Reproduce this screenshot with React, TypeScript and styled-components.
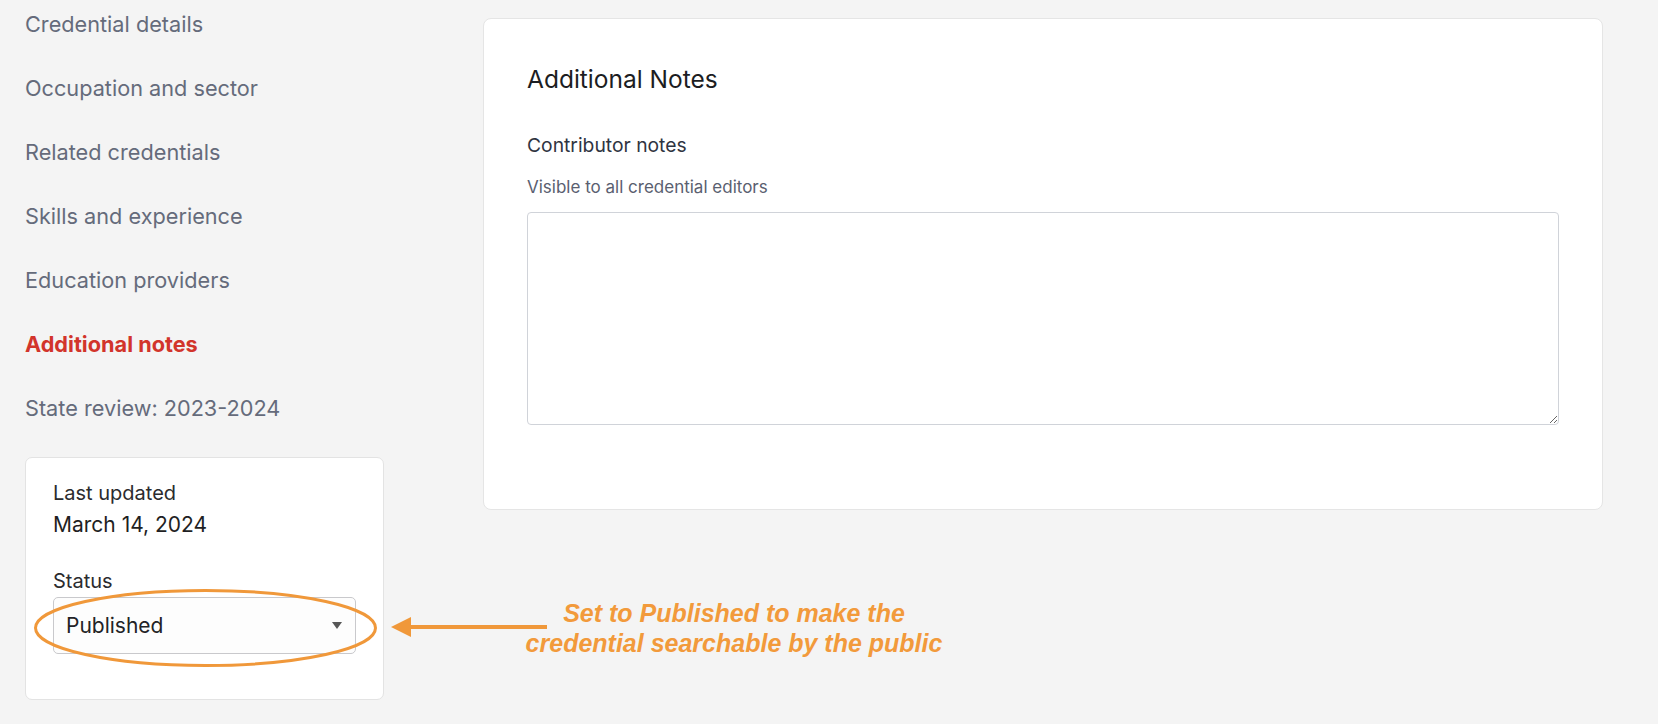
import React from "react";
import styled, { createGlobalStyle } from "styled-components";

const GlobalStyle = createGlobalStyle`
  * { box-sizing: border-box; }
  html, body { margin: 0; padding: 0; }
  body {
    background: #f4f4f4;
    font-family: Inter, "Noto Sans", sans-serif;
    -webkit-font-smoothing: antialiased;
  }
`;

const Page = styled.div`
  position: relative;
  display: grid;
  grid-template-columns: 360px 1120px;
  column-gap: 99px;
  padding-left: 24px;
  min-height: 724px;
`;

const Sidebar = styled.aside`
  display: flex;
  flex-direction: column;
  padding-top: 12px;
`;

const NavList = styled.nav`
  display: flex;
  flex-direction: column;
  gap: 40px;
  padding-left: 1px;
`;

const NavItem = styled.a<{ $active?: boolean }>`
  font-size: 21.7px;
  line-height: 24px;
  font-weight: ${(p) => (p.$active ? 700 : 400)};
  color: ${(p) => (p.$active ? "#d2342b" : "#656b7b")};
  text-decoration: none;
  cursor: pointer;
`;

const StatusCard = styled.section`
  margin-top: 37px;
  margin-left: 1px;
  width: 359px;
  background: #ffffff;
  border: 1px solid #e3e3e3;
  border-radius: 7px;
  padding: 23px 27px 45px;
  display: flex;
  flex-direction: column;
`;

const MetaLabel = styled.div`
  font-size: 20px;
  line-height: 24px;
  color: #2b2b2e;
`;

const MetaValue = styled.div`
  font-size: 21px;
  line-height: 26px;
  color: #1f1f23;
  margin-top: 7px;
`;

const StatusLabel = styled(MetaLabel)`
  margin-top: 31px;
`;

const SelectBox = styled.div`
  margin-top: 4px;
  height: 57px;
  border: 1px solid #c9c9cc;
  border-radius: 5px;
  background: #fdfdfd;
  display: flex;
  align-items: center;
  justify-content: space-between;
  padding: 0 13px 0 12px;
  font-size: 21px;
  line-height: 24px;
  color: #232326;
`;

const Caret = styled.svg`
  width: 10px;
  height: 7px;
  fill: #575757;
`;

const MainCard = styled.main`
  margin-top: 18px;
  align-self: start;
  background: #ffffff;
  border: 1px solid #e5e5e5;
  border-radius: 8px;
  padding: 44px 43px 84px;
  display: flex;
  flex-direction: column;
`;

const Heading = styled.h2`
  margin: 0;
  font-size: 24.5px;
  line-height: 32px;
  font-weight: 400;
  color: #1c1d22;
`;

const FieldLabel = styled.label`
  margin-top: 38px;
  font-size: 19.3px;
  line-height: 24px;
  font-weight: 400;
  color: #2f3441;
`;

const FieldHint = styled.div`
  margin-top: 19px;
  font-size: 17px;
  line-height: 22px;
  color: #5a6070;
`;

const NotesArea = styled.textarea`
  margin-top: 14px;
  width: 100%;
  height: 213px;
  border: 1px solid #d0d3d9;
  border-radius: 4px;
  background: #ffffff;
  font-family: inherit;
  font-size: 16px;
  padding: 10px 12px;
  resize: vertical;
  outline: none;
`;

const Callout = styled.svg`
  position: absolute;
  left: 0;
  top: 0;
  width: 1658px;
  height: 724px;
  pointer-events: none;
`;

const CalloutText = styled.div`
  position: absolute;
  left: 734px;
  top: 598px;
  transform: translateX(-50%);
  white-space: nowrap;
  text-align: center;
  font-family: "Liberation Sans", Arial, sans-serif;
  font-style: italic;
  font-weight: 700;
  font-size: 25px;
  line-height: 30px;
  color: #f29a3b;
`;

const navItems = [
  "Credential details",
  "Occupation and sector",
  "Related credentials",
  "Skills and experience",
  "Education providers",
  "Additional notes",
  "State review: 2023-2024",
];

export default function App() {
  return (
    <>
      <GlobalStyle />
      <Page>
        <Sidebar>
          <NavList>
            {navItems.map((item) => (
              <NavItem key={item} $active={item === "Additional notes"}>
                {item}
              </NavItem>
            ))}
          </NavList>
          <StatusCard>
            <MetaLabel>Last updated</MetaLabel>
            <MetaValue>March 14, 2024</MetaValue>
            <StatusLabel>Status</StatusLabel>
            <SelectBox>
              <span>Published</span>
              <Caret viewBox="0 0 10 7">
                <path d="M0 0 H10 L5 7 Z" />
              </Caret>
            </SelectBox>
          </StatusCard>
        </Sidebar>
        <MainCard>
          <Heading>Additional Notes</Heading>
          <FieldLabel>Contributor notes</FieldLabel>
          <FieldHint>Visible to all credential editors</FieldHint>
          <NotesArea />
        </MainCard>
        <Callout viewBox="0 0 1658 724">
          <ellipse
            cx="205.5"
            cy="628"
            rx="170"
            ry="37.5"
            fill="none"
            stroke="#f0983a"
            strokeWidth="3"
          />
          <line x1="409" y1="627" x2="547" y2="627" stroke="#f0983a" strokeWidth="4" />
          <path d="M391 627 L411 617 L411 637 Z" fill="#f0983a" />
        </Callout>
        <CalloutText>
          Set to Published to make the
          <br />
          credential searchable by the public
        </CalloutText>
      </Page>
    </>
  );
}
